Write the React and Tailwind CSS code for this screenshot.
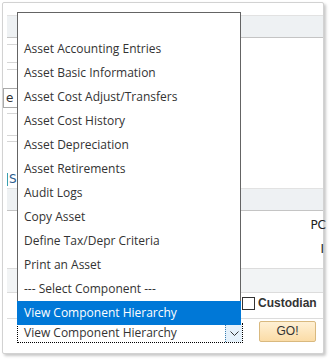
import React from "react";

const items = [
  "Asset Accounting Entries",
  "Asset Basic Information",
  "Asset Cost Adjust/Transfers",
  "Asset Cost History",
  "Asset Depreciation",
  "Asset Retirements",
  "Audit Logs",
  "Copy Asset",
  "Define Tax/Depr Criteria",
  "Print an Asset",
  "--- Select Component ---",
];

function Line({ mt = 0 }) {
  return <div className="h-px bg-[#d6d6d6]" style={{ marginTop: mt }} />;
}

export default function App() {
  return (
    <div className="w-[329px] h-[359px] bg-white overflow-hidden font-['Open_Sans',sans-serif]">
      <div className="relative ml-[2px] mt-[2px] w-[322px] h-[352px] border border-[#d2d2d2] rounded-[2px] shadow-[2px_2px_3px_rgba(0,0,0,0.22)] bg-white">
        {/* background form */}
        <div className="flex flex-col">
          <div className="h-[12px]" />
          <div className="ml-[4px] h-[23px] border-t border-[#e2e2e2] border-b border-b-[#c4c4c4] bg-[#eef1f3]" />
          {/* middle area */}
          <div className="h-[150px] flex">
            <div className="w-[20px] ml-[4px] flex flex-col">
              <Line mt={6} />
              <Line mt={17} />
              <Line mt={6} />
              <div className="mt-[18px] h-[20px] -ml-[4px] w-[16px] border border-[#a9a9a9] text-[12px] leading-[18px] text-[#333] pl-[2px] font-['DejaVu_Sans',sans-serif]">e</div>
              <Line mt={5} />
              <Line mt={21} />
              <Line mt={5} />
              <div className="mt-[29px] flex items-center h-[16px]">
                <div className="w-px h-[13px] bg-[#3aa0b0]" />
                <span className="ml-[1px] text-[12px] text-[#2a5b8c] font-['DejaVu_Sans',sans-serif]">S</span>
              </div>
            </div>
          </div>
          <div className="ml-[4px] h-[23px] border-t border-[#e2e2e2] border-b border-b-[#c4c4c4] bg-[#eef1f3]" />
          {/* PC row */}
          <div className="h-[57px] flex flex-col items-end text-[12px] text-[#222] font-['DejaVu_Sans',sans-serif]">
            <div className="mt-[6px] leading-[16px] -mr-[3px]">PC</div>
            <div className="mt-[8px] leading-[16px] -mr-[1px]">I</div>
          </div>
          <div className="ml-[4px] h-[25px] border-t border-[#dcdcdc] border-b border-b-[#dcdcdc] bg-[#f2f4f5]" />
          {/* custodian row */}
          <div className="h-[26px] flex items-center border-b border-[#dcdcdc] ml-[4px]">
            <div className="ml-[235px] -mt-[5px] flex items-center gap-[3px]">
              <div className="w-[13px] h-[13px] border border-[#333] bg-white" />
              <span className="text-[12px] font-bold text-[#333] font-['Liberation_Sans',sans-serif]">Custodian</span>
            </div>
          </div>
          {/* select + go row */}
          <div className="flex items-start ml-[14px] mt-[4px]">
            <div className="relative w-[226px] h-[20px] border border-dotted border-black flex items-center bg-white">
              <span className="ml-[6px] text-[12px] text-[#333] leading-[18px]">View Component Hierarchy</span>
              <div className="ml-auto w-[17px] h-[18px] bg-[#e5f1fb] border-l border-dotted border-[#3c7fb1] flex items-center justify-center">
                <svg width="9" height="5" viewBox="0 0 9 5" fill="none">
                  <path d="M0.5 0.5 L4.5 4.5 L8.5 0.5" stroke="#333" strokeWidth="1" />
                </svg>
              </div>
            </div>
            <button className="ml-[16px] -mt-[2px] w-[57px] h-[21px] rounded-[2px] border border-[#d9b97f] bg-gradient-to-b from-[#fff0d4] to-[#fbdca6] text-[12px] text-[#333] font-['Liberation_Sans',sans-serif] leading-[19px]">
              GO!
            </button>
          </div>
        </div>

        {/* open dropdown list overlay */}
        <div className="absolute left-[14px] top-[9px] w-[224px] border border-[#646464] bg-white text-[12px] text-[#333]">
          <div className="h-[24px]" />
          {items.map((t) => (
            <div key={t} className="h-[24px] flex items-center pl-[6px] whitespace-nowrap">
              {t}
            </div>
          ))}
          <div className="h-[24px] -mx-px -mb-px flex items-center pl-[7px] bg-[#0078d7] text-white whitespace-nowrap">
            View Component Hierarchy
          </div>
        </div>
      </div>
    </div>
  );
}
